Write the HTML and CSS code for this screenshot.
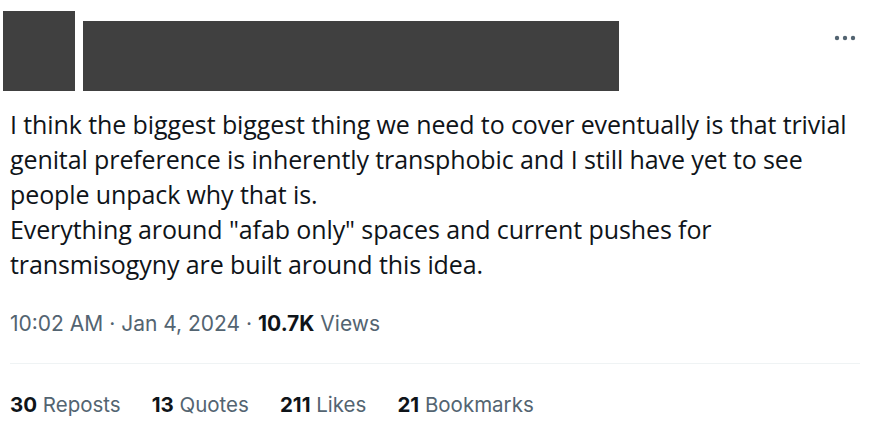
FILE: index.html
```html
<!DOCTYPE html>
<html>
<head>
<meta charset="utf-8">
<link rel="stylesheet" href="styles.css">
</head>
<body>
<div class="tweet">
  <div class="header">
    <div class="avatar"></div>
    <div class="name"></div>
    <div class="more">
      <svg width="22" height="6" viewBox="0 0 22 6"><circle cx="3" cy="3" r="2.2" fill="#536471"/><circle cx="11" cy="3" r="2.2" fill="#536471"/><circle cx="19" cy="3" r="2.2" fill="#536471"/></svg>
    </div>
  </div>
  <div class="text">I think the biggest biggest thing we need to cover eventually is that trivial genital preference is inherently transphobic and I still have yet to see people unpack why that is.<br>Everything around "afab only" spaces and current pushes for transmisogyny are built around this idea.</div>
  <div class="meta"><span>10:02 AM</span> · <span>Jan 4, 2024</span> · <b>10.7K</b> Views</div>
  <div class="sep"></div>
  <div class="stats">
    <span class="stat"><b>30</b> Reposts</span>
    <span class="stat"><b>13</b> Quotes</span>
    <span class="stat"><b>211</b> Likes</span>
    <span class="stat"><b>21</b> Bookmarks</span>
  </div>
</div>
</body>
</html>
```
FILE: styles.css
```css
html, body {
  margin: 0;
  padding: 0;
  background: #ffffff;
}
.tweet {
  width: 880px;
  height: 436px;
  box-sizing: border-box;
  padding: 11px 20px 0 3px;
}
.header {
  display: flex;
  align-items: flex-end;
  height: 80px;
}
.avatar {
  width: 72px;
  height: 80px;
  background: #404040;
}
.name {
  width: 536px;
  height: 70px;
  margin-left: 8px;
  background: #404040;
}
.more {
  align-self: flex-start;
  margin-left: auto;
  margin-top: 24px;
  margin-right: 4px;
  display: flex;
}
.text {
  margin: 16px 0 0 7px;
  font-family: "Open Sans", "Noto Sans", sans-serif;
  font-size: 25px;
  letter-spacing: -0.1px;
  line-height: 35px;
  color: #0f1419;
  width: 852px;
}
.meta {
  margin: 30px 0 0 7px;
  font-family: "Inter", "Liberation Sans", sans-serif;
  font-size: 21px;
  line-height: 24px;
  color: #536471;
}
.meta b, .stat b {
  color: #0f1419;
  font-weight: 700;
}
.sep {
  margin: 27px 0 0 7px;
  width: 850px;
  height: 1px;
  background: #eff3f4;
}
.stats {
  margin: 29px 0 0 7px;
  display: flex;
  gap: 31px;
  font-family: "Inter", "Liberation Sans", sans-serif;
  font-size: 20.5px;
  line-height: 24px;
  color: #536471;
}
```
